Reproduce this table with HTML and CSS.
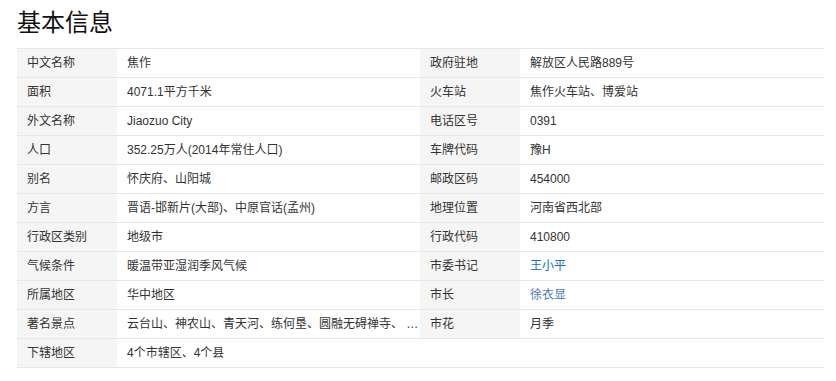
FILE: index.html
```html
<!DOCTYPE html>
<html lang="zh">
<head>
<meta charset="utf-8">
<title>基本信息</title>
<link rel="stylesheet" href="styles.css">
</head>
<body>
<div class="page">
  <h2 class="title">基本信息</h2>
  <div class="info">
    <div class="k">中文名称</div><div class="v">焦作</div>
    <div class="k">政府驻地</div><div class="v">解放区人民路889号</div>
    <div class="k">面积</div><div class="v">4071.1平方千米</div>
    <div class="k">火车站</div><div class="v">焦作火车站、博爱站</div>
    <div class="k">外文名称</div><div class="v">Jiaozuo City</div>
    <div class="k">电话区号</div><div class="v">0391</div>
    <div class="k">人口</div><div class="v">352.25万人(2014年常住人口)</div>
    <div class="k">车牌代码</div><div class="v">豫H</div>
    <div class="k">别名</div><div class="v">怀庆府、山阳城</div>
    <div class="k">邮政区码</div><div class="v">454000</div>
    <div class="k">方言</div><div class="v">晋语-邯新片(大部)、中原官话(孟州)</div>
    <div class="k">地理位置</div><div class="v">河南省西北部</div>
    <div class="k">行政区类别</div><div class="v">地级市</div>
    <div class="k">行政代码</div><div class="v">410800</div>
    <div class="k">气候条件</div><div class="v">暖温带亚湿润季风气候</div>
    <div class="k">市委书记</div><div class="v"><a class="link" href="#">王小平</a></div>
    <div class="k">所属地区</div><div class="v">华中地区</div>
    <div class="k">市长</div><div class="v"><a class="link visited" href="#">徐衣显</a></div>
    <div class="k">著名景点</div><div class="v">云台山、神农山、青天河、练何垦、圆融无碍禅寺、 …</div>
    <div class="k">市花</div><div class="v">月季</div>
    <div class="k">下辖地区</div><div class="v">4个市辖区、4个县</div>
    <div class="empty"></div>
  </div>
</div>
</body>
</html>
```

FILE: styles.css
```css
* { box-sizing: border-box; }
html, body { margin: 0; padding: 0; background: #fff; }
body {
  font-family: "Liberation Sans", "Noto Sans CJK SC", sans-serif;
  color: #333;
}
.page { padding: 6px 12px 0 17px; }
.title {
  margin: 0;
  font-size: 24px;
  font-weight: normal;
  line-height: 34px;
  color: #111;
  height: 42px;
}
.info {
  display: grid;
  grid-template-columns: 100px 303px 100px 304px;
  border-top: 1px solid #e6e6e6;
  width: 807px;
}
.k, .v, .empty {
  height: 29px;
  border-bottom: 1px solid #e6e6e6;
  font-size: 12px;
  line-height: 28px;
  padding-left: 10px;
  white-space: nowrap;
  overflow: hidden;
}
.k { background: #f5f5f5; color: #333; }
.v { background: #fff; color: #333; }
.empty { grid-column: span 2; }
.link { color: #136ec2; text-decoration: none; }
.link.visited { color: #4a7ab8; }
```
